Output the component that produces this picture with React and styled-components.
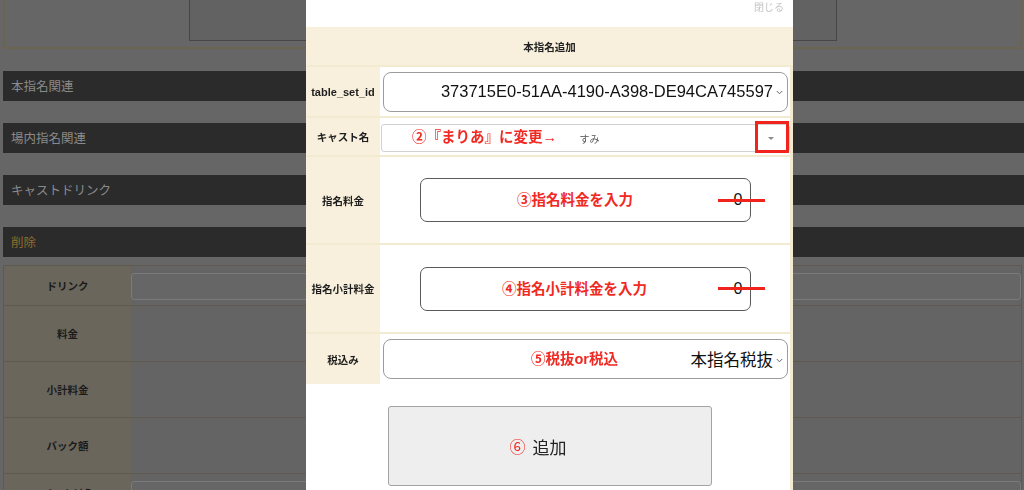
import React from "react";
import styled, { createGlobalStyle } from "styled-components";

const GlobalStyle = createGlobalStyle`
  html, body { margin: 0; padding: 0; }
  body {
    background: #666666;
    font-family: "Noto Sans CJK JP", "Noto Sans", sans-serif;
    overflow: hidden;
    width: 1024px;
    height: 490px;
  }
  * { box-sizing: border-box; }
`;

/* ---------- background page ---------- */
const Page = styled.div`
  display: flex;
  flex-direction: column;
  padding-left: 3px;
  width: 1024px;
`;

const TopBox = styled.div`
  height: 49px;
  margin-right: 2px;
  border: 2px solid #6b6450;
  border-top: none;
  padding-left: 184px;
`;

const TopInner = styled.div`
  width: 648px;
  height: 41px;
  background: #626262;
  border: 1px solid #464646;
  border-top: none;
`;

const Sections = styled.div`
  display: flex;
  flex-direction: column;
  gap: 22px;
  margin-top: 22px;
`;

const Bar = styled.div`
  height: 30px;
  background: #2b2b2b;
  color: ${(p) => (p.$danger ? "#8e6b2d" : "#8a8a8a")};
  font-size: 12.5px;
  line-height: 30px;
  padding-left: 8px;
`;

const BgTable = styled.div`
  display: grid;
  grid-template-columns: 127px 1fr;
  margin: 8px 2px 0 0;
  border: 1px solid #5e5a4e;
  border-bottom: none;
`;

const BgLabel = styled.div`
  height: ${(p) => p.$h}px;
  background: #6a665c;
  border-bottom: 1px solid #5e5a4e;
  display: flex;
  align-items: center;
  justify-content: center;
  font-size: 10.5px;
  font-weight: 700;
  color: #1b1b1b;
`;

const BgCell = styled.div`
  height: ${(p) => p.$h}px;
  background: #646464;
  border-bottom: 1px solid #5e5a4e;
  padding-top: 7px;
`;

const BgInput = styled.div`
  height: 27px;
  border: 1px solid #7a7a7a;
  border-radius: 3px;
  background: #666666;
`;

/* ---------- modal ---------- */
const Modal = styled.div`
  position: fixed;
  top: 0;
  left: 306px;
  width: 487px;
  height: 490px;
  background: #ffffff;
  display: flex;
  flex-direction: column;
`;

const CloseBar = styled.div`
  height: 27px;
  display: flex;
  justify-content: flex-end;
  align-items: flex-start;
  padding: 0 9px 0 0;
  font-size: 10px;
  line-height: 14px;
  color: #c4c4c4;
`;

const FormTable = styled.div`
  display: grid;
  grid-template-columns: 74px 1fr;
  row-gap: 2px;
  background: #f3ead2;
  padding-right: 3px;
`;

const HeaderCell = styled.div`
  grid-column: 1 / span 2;
  height: 38px;
  background: #f8f0dc;
  display: flex;
  align-items: center;
  justify-content: center;
  font-size: 10.5px;
  font-weight: 700;
  color: #222;
  margin-right: -3px;
`;

const Label = styled.div`
  height: ${(p) => p.$h}px;
  background: #f8f0dc;
  display: flex;
  align-items: center;
  justify-content: center;
  font-family: "Liberation Sans", "Noto Sans CJK JP", sans-serif;
  font-size: ${(p) => (p.$latin ? "11px" : "10.5px")};
  font-weight: 700;
  color: #1e1e1e;
  white-space: nowrap;
`;

const Cell = styled.div`
  position: relative;
  height: ${(p) => p.$h}px;
  background: #ffffff;
  display: flex;
  align-items: center;
  padding: ${(p) => p.$pad || "0"};
`;

const SelectBox = styled.div`
  flex: 1;
  height: 40px;
  border: 1px solid #9c9c9c;
  border-radius: 8px;
  display: flex;
  align-items: center;
  justify-content: flex-end;
  padding-right: 4px;
  gap: 3px;
  font-family: "Liberation Sans", "Noto Sans CJK JP", sans-serif;
  font-size: 16.5px;
  color: #111;
  white-space: nowrap;
`;

const SmallSelect = styled.div`
  flex: 1;
  height: 28px;
  margin-top: 3px;
  border: 1px solid #d2d2d2;
  border-radius: 3px;
  display: flex;
  align-items: center;
  justify-content: center;
  padding-left: 8px;
  font-size: 10px;
  color: #555;
  position: relative;
`;

const Triangle = styled.span`
  position: absolute;
  right: 15px;
  top: 12px;
  width: 0;
  height: 0;
  border-left: 3px solid transparent;
  border-right: 3px solid transparent;
  border-top: 3px solid #8a8a8a;
`;

const RedBox = styled.div`
  position: absolute;
  right: 1px;
  top: 3px;
  width: 34px;
  height: 32px;
  border: 3px solid #f0241d;
`;

const NumberBox = styled.div`
  width: 331px;
  height: 44px;
  margin: 0 auto;
  border: 1.5px solid #5a5a5a;
  border-radius: 7px;
  display: flex;
  align-items: center;
  justify-content: flex-end;
  padding-right: 7px;
  font-family: "Liberation Sans", sans-serif;
  font-size: 16px;
  color: #111;
`;

const Note = styled.span`
  position: absolute;
  top: 50%;
  left: ${(p) => p.$left}px;
  transform: translateY(-50%);
  color: #f02a22;
  font-size: 14.5px;
  font-weight: 700;
  white-space: nowrap;
  line-height: 1;
  font-family: "Liberation Sans", "Noto Sans CJK JP", sans-serif;
`;

const Strike = styled.span`
  position: absolute;
  left: 338px;
  top: calc(50% - 1.5px);
  width: 47px;
  height: 3px;
  background: #f0241d;
`;

const Footer = styled.div`
  flex: 1;
  display: flex;
  justify-content: center;
  padding-top: 22px;
  border-right: 3px solid #f3ead2;
`;

const AddButton = styled.div`
  position: relative;
  width: 324px;
  height: 80px;
  margin-left: 3px;
  background: #eeeeee;
  border: 1px solid #a3a3a3;
  border-radius: 3px;
  display: flex;
  align-items: center;
  justify-content: center;
  font-size: 17px;
  color: #222;
`;

const ButtonText = styled.span`
  position: relative;
`;

const ButtonMark = styled.span`
  position: absolute;
  right: calc(100% + 7px);
  top: 50%;
  transform: translateY(-50%);
  color: #f02a22;
  font-size: 16px;
  line-height: 1;
`;

const Chevron = () => (
  <svg width="7" height="5" viewBox="0 0 7 5" style={{ marginTop: 2 }}>
    <path d="M0.8 1 L3.5 3.8 L6.2 1" fill="none" stroke="#666" strokeWidth="1" />
  </svg>
);

const bgRows = [
  { label: "ドリンク", h: 40, input: true },
  { label: "料金", h: 56 },
  { label: "小計料金", h: 56 },
  { label: "バック額", h: 56 },
  { label: "バック対象", h: 40, input: true },
];

export default function App() {
  return (
    <>
      <GlobalStyle />
      <Page>
        <TopBox>
          <TopInner />
        </TopBox>
        <Sections>
          <Bar>本指名関連</Bar>
          <Bar>場内指名関連</Bar>
          <Bar>キャストドリンク</Bar>
          <Bar $danger>削除</Bar>
        </Sections>
        <BgTable>
          {bgRows.map((r) => (
            <React.Fragment key={r.label}>
              <BgLabel $h={r.h}>{r.label}</BgLabel>
              <BgCell $h={r.h}>{r.input && <BgInput />}</BgCell>
            </React.Fragment>
          ))}
        </BgTable>
      </Page>

      <Modal>
        <CloseBar>閉じる</CloseBar>
        <FormTable>
          <HeaderCell>本指名追加</HeaderCell>

          <Label $h={49} $latin>table_set_id</Label>
          <Cell $h={49} $pad="0 2px 0 3px">
            <SelectBox>
              373715E0-51AA-4190-A398-DE94CA745597
              <Chevron />
            </SelectBox>
          </Cell>

          <Label $h={37}>キャスト名</Label>
          <Cell $h={37} $pad="0 0 0 1px">
            <SmallSelect>
              すみ
              <Triangle />
            </SmallSelect>
            <Note $left={32}>②『まりあ』に変更→</Note>
            <RedBox />
          </Cell>

          <Label $h={86}>指名料金</Label>
          <Cell $h={86}>
            <NumberBox>0</NumberBox>
            <Note $left={137}>③指名料金を入力</Note>
            <Strike />
          </Cell>

          <Label $h={87}>指名小計料金</Label>
          <Cell $h={87}>
            <NumberBox>0</NumberBox>
            <Note $left={122}>④指名小計料金を入力</Note>
            <Strike />
          </Cell>

          <Label $h={50}>税込み</Label>
          <Cell $h={50} $pad="0 2px 0 3px">
            <SelectBox>
              本指名税抜
              <Chevron />
            </SelectBox>
            <Note $left={151}>⑤税抜or税込</Note>
          </Cell>
        </FormTable>
        <Footer>
          <AddButton>
            <ButtonText>
              <ButtonMark>⑥</ButtonMark>
              追加
            </ButtonText>
          </AddButton>
        </Footer>
      </Modal>
    </>
  );
}
